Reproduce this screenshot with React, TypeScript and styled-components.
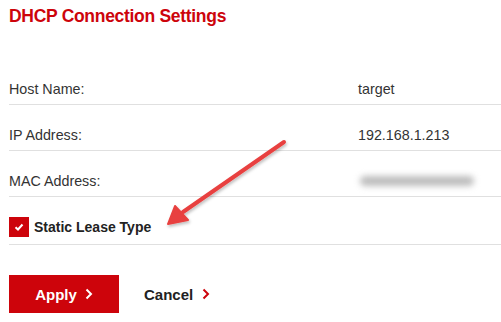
import React from 'react';
import styled, { createGlobalStyle } from 'styled-components';

const GlobalStyle = createGlobalStyle`
  html, body {
    margin: 0;
    padding: 0;
    background: #fff;
  }
  body {
    font-family: "Liberation Sans", Arial, sans-serif;
    color: #333;
  }
`;

const rows = [
  { label: 'Host Name:', value: 'target' },
  { label: 'IP Address:', value: '192.168.1.213' },
  { label: 'MAC Address:', value: '', blurred: true },
];

const App = () => {
  return (
    <>
      <GlobalStyle />
      <Page>
        <Title>DHCP Connection Settings</Title>
        <Table>
          {rows.map(row => (
            <Row key={row.label}>
              <span>{row.label}</span>
              <span>{row.blurred ? <Blurred /> : row.value}</span>
            </Row>
          ))}
          <CheckRow>
            <Checkbox>
              <svg width="10" height="8" viewBox="0 0 10 8">
                <path d="M1.5 4.2 L4 6.5 L8.5 1.5" stroke="#fff" strokeWidth="2" fill="none" />
              </svg>
            </Checkbox>
            <CheckLabel>Static Lease Type</CheckLabel>
          </CheckRow>
        </Table>
        <Actions>
          <ApplyButton>
            Apply <Chevron color="#fff" />
          </ApplyButton>
          <CancelButton>
            Cancel <Chevron color="#cd040b" />
          </CancelButton>
        </Actions>
        <Arrow width="501" height="322" viewBox="0 0 501 322">
          <defs>
            <filter id="shadow" x="-20%" y="-20%" width="140%" height="140%">
              <feDropShadow dx="1" dy="2" stdDeviation="1.5" floodColor="#000" floodOpacity="0.25" />
            </filter>
          </defs>
          <g filter="url(#shadow)">
            <line x1="284" y1="142" x2="183" y2="212" stroke="#e8413f" strokeWidth="4" strokeLinecap="round" />
            <polygon points="168,224 175,206 188,220" fill="#e8413f" stroke="#e8413f" strokeWidth="2" strokeLinejoin="round" />
          </g>
        </Arrow>
      </Page>
    </>
  );
};

const Chevron = ({ color }: { color: string }) => (
  <svg width="8" height="12" viewBox="0 0 8 12">
    <path d="M1.5 1.5 L6 6 L1.5 10.5" stroke={color} strokeWidth="2" fill="none" />
  </svg>
);

const Page = styled.div`
  position: relative;
  width: 501px;
  height: 322px;
  padding: 6px 0 0 9px;
  box-sizing: border-box;
  overflow: hidden;
`;

const Title = styled.h1`
  margin: 0;
  font-size: 17.5px;
  line-height: 20px;
  font-weight: 700;
  color: #cd040b;
  letter-spacing: -0.3px;
`;

const Table = styled.div`
  margin-top: 33px;
  display: flex;
  flex-direction: column;
`;

const Row = styled.div`
  display: grid;
  grid-template-columns: 349px 1fr;
  align-items: end;
  box-sizing: border-box;
  height: 46px;
  padding-bottom: 7px;
  border-bottom: 1px solid #e0e0e0;
  font-size: 14.3px;
  line-height: 16px;
  color: #333;
`;

const Blurred = styled.div`
  width: 114px;
  height: 10px;
  margin: 0 0 3px 2px;
  background: #bdbdbd;
  border-radius: 5px;
  filter: blur(3px);
`;

const CheckRow = styled.div`
  display: flex;
  align-items: flex-end;
  gap: 5px;
  box-sizing: border-box;
  height: 48px;
  padding-bottom: 7px;
  border-bottom: 1px solid #e0e0e0;
`;

const Checkbox = styled.div`
  width: 20px;
  height: 20px;
  background: #cd040b;
  display: flex;
  align-items: center;
  justify-content: center;
`;

const CheckLabel = styled.div`
  font-size: 14px;
  line-height: 20px;
  font-weight: 700;
  color: #222;
`;

const Actions = styled.div`
  margin-top: 30px;
  display: flex;
  align-items: center;
  gap: 25px;
`;

const ApplyButton = styled.button`
  width: 110px;
  height: 38px;
  border: none;
  background: #cd040b;
  color: #fff;
  font-family: inherit;
  font-size: 15px;
  font-weight: 700;
  display: flex;
  align-items: center;
  justify-content: center;
  gap: 8px;
  padding: 0;
`;

const CancelButton = styled.button`
  border: none;
  background: none;
  color: #222;
  font-family: inherit;
  font-size: 15px;
  font-weight: 700;
  display: flex;
  align-items: center;
  gap: 9px;
  padding: 0;
`;

const Arrow = styled.svg`
  position: absolute;
  top: 0;
  left: 0;
  pointer-events: none;
`;

export default App;
